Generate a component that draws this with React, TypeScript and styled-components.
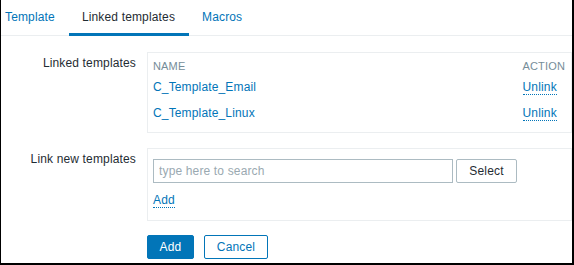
import styled, { createGlobalStyle } from 'styled-components';

const GlobalStyle = createGlobalStyle`
  html, body {
    margin: 0;
    padding: 0;
    background: #fff;
  }
  body {
    font-family: "Liberation Sans", Arial, sans-serif;
    font-size: 12px;
    letter-spacing: 0.15px;
    color: #1f2c33;
  }
`;

const Frame = styled.div`
  width: 574px;
  height: 265px;
  box-sizing: border-box;
  border-left: 1px solid #000;
  border-right: 2px solid #000;
  border-bottom: 2px solid #000;
  background: #fff;
  overflow: hidden;
`;

const TabBar = styled.nav`
  display: flex;
  height: 36px;
  box-sizing: border-box;
  border-bottom: 1px solid #ebeef0;
`;

const Tab = styled.a<{ $active?: boolean; $first?: boolean }>`
  display: flex;
  align-items: center;
  height: 36px;
  margin-bottom: -1px;
  box-sizing: border-box;
  padding: 0 14px 0 ${(p) => (p.$first ? '4px' : '13px')};
  border-bottom: 3px solid ${(p) => (p.$active ? '#0275b8' : 'transparent')};
  color: ${(p) => (p.$active ? '#1f2c33' : '#0275b8')};
  font-size: 12px;
  text-decoration: none;
  cursor: pointer;
`;

const Form = styled.div`
  display: grid;
  grid-template-columns: 135px 1fr;
  column-gap: 11px;
  row-gap: 15px;
  padding-top: 16px;
`;

const Label = styled.div`
  text-align: right;
  padding-top: 4px;
  line-height: 14px;
  font-size: 12px;
  color: #1f2c33;
`;

const Box = styled.div<{ $pad: string }>`
  border: 1px solid #ebeef0;
  padding: ${(p) => p.$pad};
  min-width: 0;
`;

const Table = styled.table`
  width: 100%;
  border-collapse: collapse;
`;

const Th = styled.th`
  height: 15px;
  padding: 0;
  text-align: left;
  vertical-align: top;
  font-weight: normal;
  font-size: 11px;
  line-height: 14px;
  color: #768d99;
  text-transform: uppercase;
`;

const Td = styled.td<{ $narrow?: boolean }>`
  height: 26px;
  padding: 0;
  width: ${(p) => (p.$narrow ? '42px' : 'auto')};
  vertical-align: middle;
`;

const Link = styled.a`
  color: #0275b8;
  text-decoration: none;
  font-size: 12px;
  cursor: pointer;
`;

const DottedLink = styled(Link)`
  border-bottom: 1px dotted #0275b8;
`;

const SearchRow = styled.div`
  display: flex;
  gap: 3px;
  height: 24px;
`;

const SearchInput = styled.input`
  width: 300px;
  height: 24px;
  box-sizing: border-box;
  border: 1px solid #acbbc2;
  padding: 0 5px;
  font-family: "Liberation Sans", Arial, sans-serif;
  font-size: 12px;
  letter-spacing: 0.15px;
  color: #1f2c33;
  outline: none;
  &::placeholder {
    color: #9aa9b1;
  }
`;

const Button = styled.button<{ $variant: 'primary' | 'alt' | 'grey'; $width: number }>`
  width: ${(p) => p.$width}px;
  height: 24px;
  box-sizing: border-box;
  padding: 0;
  border-radius: 2px;
  font-family: "Liberation Sans", Arial, sans-serif;
  font-size: 12px;
  letter-spacing: 0.15px;
  cursor: pointer;
  border: 1px solid
    ${(p) => (p.$variant === 'grey' ? '#acbbc2' : '#0275b8')};
  background: ${(p) => (p.$variant === 'primary' ? '#0275b8' : '#fff')};
  color: ${(p) =>
    p.$variant === 'primary' ? '#fff' : p.$variant === 'alt' ? '#0275b8' : '#1f2c33'};
`;

const AddRow = styled.div`
  margin-top: 5px;
  height: 24px;
  line-height: 25px;
`;

const Actions = styled.div`
  grid-column: 2;
  display: flex;
  gap: 10px;
  margin-top: -1px;
`;

const linked = ['C_Template_Email', 'C_Template_Linux'];

export default function App() {
  return (
    <>
      <GlobalStyle />
      <Frame>
        <TabBar>
          <Tab $first>Template</Tab>
          <Tab $active>Linked templates</Tab>
          <Tab>Macros</Tab>
        </TabBar>
        <Form>
          <Label>Linked templates</Label>
          <Box $pad="6px 6px 6px 5px">
            <Table>
              <thead>
                <tr>
                  <Th>Name</Th>
                  <Th>Action</Th>
                </tr>
              </thead>
              <tbody>
                {linked.map((name) => (
                  <tr key={name}>
                    <Td>
                      <Link>{name}</Link>
                    </Td>
                    <Td $narrow>
                      <DottedLink>Unlink</DottedLink>
                    </Td>
                  </tr>
                ))}
              </tbody>
            </Table>
          </Box>

          <Label>Link new templates</Label>
          <Box $pad="10px 5px 8px 5px">
            <SearchRow>
              <SearchInput placeholder="type here to search" />
              <Button $variant="grey" $width={61}>Select</Button>
            </SearchRow>
            <AddRow>
              <DottedLink>Add</DottedLink>
            </AddRow>
          </Box>

          <Actions>
            <Button $variant="primary" $width={47}>Add</Button>
            <Button $variant="alt" $width={64}>Cancel</Button>
          </Actions>
        </Form>
      </Frame>
    </>
  );
}
